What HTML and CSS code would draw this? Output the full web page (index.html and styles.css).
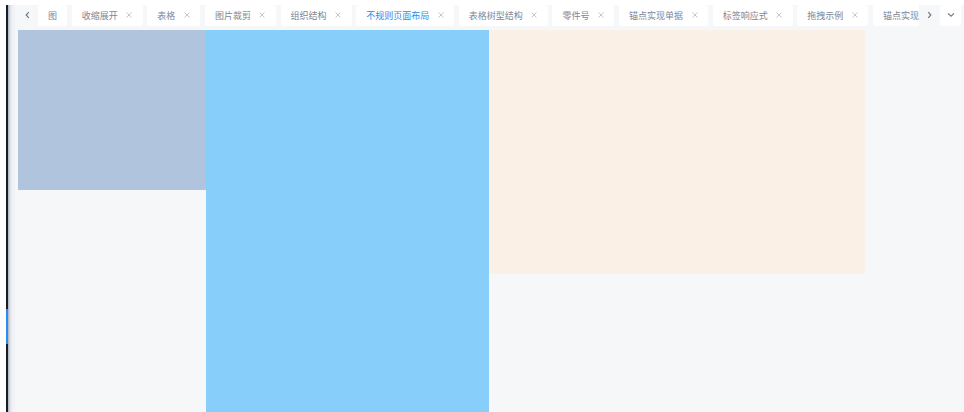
FILE: index.html
```html
<!DOCTYPE html>
<html lang="zh-CN">
<head>
<meta charset="utf-8">
<title>不规则页面布局</title>
<link rel="stylesheet" href="styles.css">
</head>
<body>
<div class="app">
  <aside class="sidebar"><div class="sidebar-active"></div></aside>
  <div class="main">
    <nav class="tabbar">
      <button class="scroll" type="button" aria-label="向左滚动"><svg class="chevron" viewBox="0 0 8 8"><path d="M4.8 1.2 2.2 4l2.6 2.8"/></svg></button>
      <ul class="tabs">
        <li class="tab"><a href="#">图</a></li>
        <li class="tab"><a href="#">收缩展开</a><button class="close" type="button" aria-label="关闭"><svg viewBox="0 0 6 6"><path d="M.5.5l5 5M5.5.5l-5 5"/></svg></button></li>
        <li class="tab"><a href="#">表格</a><button class="close" type="button" aria-label="关闭"><svg viewBox="0 0 6 6"><path d="M.5.5l5 5M5.5.5l-5 5"/></svg></button></li>
        <li class="tab"><a href="#">图片裁剪</a><button class="close" type="button" aria-label="关闭"><svg viewBox="0 0 6 6"><path d="M.5.5l5 5M5.5.5l-5 5"/></svg></button></li>
        <li class="tab"><a href="#">组织结构</a><button class="close" type="button" aria-label="关闭"><svg viewBox="0 0 6 6"><path d="M.5.5l5 5M5.5.5l-5 5"/></svg></button></li>
        <li class="tab tab-active"><a href="#">不规则页面布局</a><button class="close" type="button" aria-label="关闭"><svg viewBox="0 0 6 6"><path d="M.5.5l5 5M5.5.5l-5 5"/></svg></button></li>
        <li class="tab"><a href="#">表格树型结构</a><button class="close" type="button" aria-label="关闭"><svg viewBox="0 0 6 6"><path d="M.5.5l5 5M5.5.5l-5 5"/></svg></button></li>
        <li class="tab"><a href="#">零件号</a><button class="close" type="button" aria-label="关闭"><svg viewBox="0 0 6 6"><path d="M.5.5l5 5M5.5.5l-5 5"/></svg></button></li>
        <li class="tab"><a href="#">锚点实现单据</a><button class="close" type="button" aria-label="关闭"><svg viewBox="0 0 6 6"><path d="M.5.5l5 5M5.5.5l-5 5"/></svg></button></li>
        <li class="tab"><a href="#">标签响应式</a><button class="close" type="button" aria-label="关闭"><svg viewBox="0 0 6 6"><path d="M.5.5l5 5M5.5.5l-5 5"/></svg></button></li>
        <li class="tab"><a href="#">拖拽示例</a><button class="close" type="button" aria-label="关闭"><svg viewBox="0 0 6 6"><path d="M.5.5l5 5M5.5.5l-5 5"/></svg></button></li>
        <li class="tab tab-cut"><a href="#">锚点实现</a></li>
      </ul>
      <button class="scroll" type="button" aria-label="向右滚动"><svg class="chevron" viewBox="0 0 8 8"><path d="M3.2 1.2 5.8 4 3.2 6.8"/></svg></button>
      <button class="more" type="button" aria-label="更多"><svg class="chevron" viewBox="0 0 8 8"><path d="M1 2.4 4 5.2l3-2.8"/></svg></button>
    </nav>
    <main class="blocks">
      <div class="block-steel"></div>
      <div class="block-sky"></div>
      <div class="block-linen"></div>
    </main>
  </div>
</div>
</body>
</html>
```
FILE: styles.css
```css
* {
  box-sizing: border-box;
}

body {
  margin: 0;
  padding: 5px 0 0 6px;
  height: 100vh;
  overflow: hidden;
  background: #fff;
  font: 9px/20px "Noto Sans CJK SC", sans-serif;
  color: #808695;
}

button {
  display: flex;
  align-items: center;
  justify-content: center;
  margin: 0;
  padding: 0;
  border: 0;
  background: none;
  color: inherit;
}

svg {
  display: block;
  fill: none;
  stroke: currentColor;
}

.app {
  display: flex;
  height: 100%;
}

.sidebar {
  display: flex;
  flex-direction: column;
  justify-content: flex-end;
  width: 2px;
  padding-bottom: 68px;
  background: #171c26;
}

.sidebar-active {
  height: 35px;
  background: #2d8cf0;
}

.main {
  display: flex;
  flex: 1;
  flex-direction: column;
  gap: 4px;
  min-width: 0;
  padding: 0 3px 0 10px;
  background: linear-gradient(to right, #a9b3bd, #dcdfe7 2px, #eef0f5 4px, #f5f7f9 8px);
}

.tabbar {
  display: flex;
  height: 21px;
}

.scroll {
  width: 20px;
  padding-bottom: 1px;
  color: #717784;
}

.chevron {
  width: 8px;
  height: 8px;
  stroke-width: 1.2;
}

.tabs {
  display: flex;
  flex: 1;
  justify-content: space-between;
  min-width: 0;
  margin: 0;
  padding: 0;
  overflow: hidden;
  list-style: none;
}

.tab {
  display: flex;
  flex: none;
  align-items: center;
  gap: 8px;
  padding: 0 10px;
  border-radius: 2px;
  background: #fff;
  white-space: nowrap;
}

.tab a {
  color: inherit;
  text-decoration: none;
}

.tab-active a {
  color: #2d8cf0;
}

.tab-cut {
  width: 46px;
  padding-right: 0;
  overflow: hidden;
  border-radius: 2px 0 0 2px;
}

.close {
  width: 7px;
  height: 10px;
  padding-bottom: 2px;
  color: #aaaeb7;
}

.close svg {
  width: 6px;
  height: 6px;
  stroke-width: 0.7;
}

.more {
  width: 21px;
  margin-left: 1px;
  padding-bottom: 1px;
  border-radius: 2px;
  background: #fff;
  color: #717784;
}

.blocks {
  display: grid;
  flex: 1;
  grid-template-columns: 2fr 3fr 4fr 1fr;
  align-items: start;
  padding-right: 2px;
}

.block-steel {
  height: 160px;
  background: #b0c4de;
}

.block-sky {
  height: 100%;
  background: #87cefa;
}

.block-linen {
  height: 244px;
  background: #faf0e6;
}
```
